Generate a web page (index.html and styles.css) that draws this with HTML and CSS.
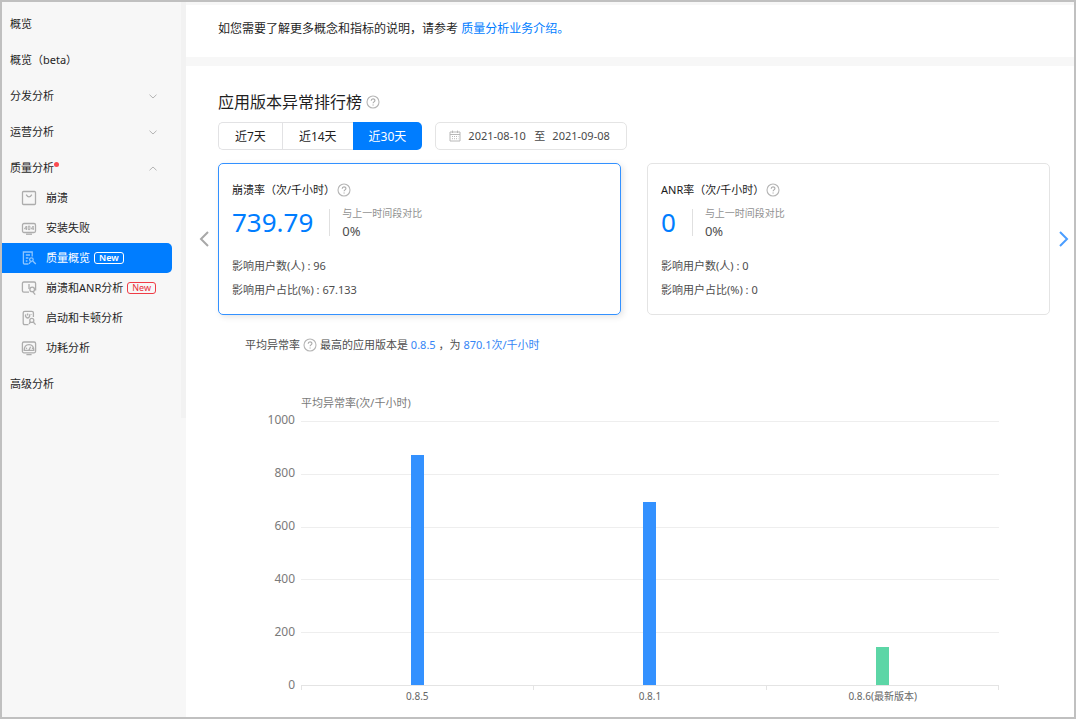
FILE: index.html
```html
<!DOCTYPE html>
<html lang="zh-CN">
<head>
<meta charset="utf-8">
<title>质量概览</title>
<link rel="stylesheet" href="styles.css">
</head>
<body>
<svg class="defs" width="0" height="0" aria-hidden="true">
  <symbol id="help" viewBox="0 0 14 14"><circle cx="7" cy="7" r="6" fill="none" stroke="#b5b5b5" stroke-width="1.1"/><path d="M5.2 5.7C5.2 3.2 8.9 3.3 8.9 5.5C8.9 6.9 7.1 6.9 7.1 8.3M7.1 9.4V10.6" fill="none" stroke="#adadad" stroke-width="1.2"/></symbol>
  <symbol id="down" viewBox="0 0 8 5"><path d="M.5 .7L4 4L7.5 .7" fill="none" stroke="#b4b4b4"/></symbol>
  <symbol id="up" viewBox="0 0 8 5"><path d="M.5 4.3L4 1L7.5 4.3" fill="none" stroke="#b4b4b4"/></symbol>
</svg>
<div class="app">
  <nav class="sidebar">
    <ul class="menu">
      <li><a class="item" href="#">概览</a></li>
      <li><a class="item" href="#">概览（beta）</a></li>
      <li><a class="item" href="#">分发分析<svg class="chevron"><use href="#down"/></svg></a></li>
      <li><a class="item" href="#">运营分析<svg class="chevron"><use href="#down"/></svg></a></li>
      <li>
        <a class="item" href="#">质量分析<span class="dot"></span><svg class="chevron"><use href="#up"/></svg></a>
        <ul class="submenu">
          <li><a class="subitem" href="#"><svg class="icon" viewBox="0 0 16 16"><rect x="1.5" y="1.5" width="13" height="13" rx="1"/><path d="M5.2 4.6Q8 9 10.8 4.6"/></svg>崩溃</a></li>
          <li><a class="subitem" href="#"><svg class="icon" viewBox="0 0 16 16"><rect x="1.5" y="3.5" width="13" height="9" rx="1.5"/><path d="M5 14.2H11"/><path class="thin" d="M5.4 10V6L3.4 8.8H6M7.2 6.2H8.9V9.6H7.2ZM12.2 10V6L10.2 8.8H12.8"/></svg>安装失败</a></li>
          <li><a class="subitem active" href="#"><svg class="icon" viewBox="0 0 16 16"><path d="M7.5 14H3.6Q2.4 14 2.4 12.8V2H11.2V6.5M4.8 5H9M4.8 8H7.4M4.8 11H6.4"/><circle cx="10.4" cy="9.6" r="1.8"/><path d="M8.2 14Q8.6 11.8 10.4 11.6M11.8 11L14.8 14"/></svg>质量概览<span class="tag">New</span></a></li>
          <li><a class="subitem" href="#"><svg class="icon" viewBox="0 0 16 16"><path d="M8 12.2H2.8Q1.4 12.2 1.4 10.8V3.4Q1.4 2 2.8 2H13.2Q14.6 2 14.6 3.4V10.6M8 4V9"/><circle cx="11.2" cy="9.4" r="2.3"/><path d="M11.8 11.6L14.2 14.6"/></svg>崩溃和ANR分析<span class="tag">New</span></a></li>
          <li><a class="subitem" href="#"><svg class="icon" viewBox="0 0 16 16"><path d="M7.5 14.6H3.8Q2.2 14.6 2.2 13V2.8Q2.2 1.4 3.8 1.4H10.8Q12.4 1.4 12.4 2.8V7"/><path d="M5 4.4A2.1 2.1 0 1 0 8.2 4.4M6.6 3.4V5.6M10 4.2V5"/><circle cx="10.8" cy="10.4" r="2"/><path d="M12.2 12L14.6 14.6M8 13.8L9.4 12"/></svg>启动和卡顿分析</a></li>
          <li><a class="subitem" href="#"><svg class="icon" viewBox="0 0 16 16"><rect x="1.4" y="2" width="13.2" height="10.8" rx="1.5"/><path d="M3.2 10.4Q3.2 4.6 8 4.6Q12.8 4.6 12.8 10.4ZM8 10L9.6 6.8M5.4 14.6H10.6M5 8L6 8.6M11 8.6L12 8"/></svg>功耗分析</a></li>
        </ul>
      </li>
      <li><a class="item" href="#">高级分析</a></li>
    </ul>
  </nav>
  <main class="main">
    <section class="notice">如您需要了解更多概念和指标的说明，请参考 <a href="#">质量分析业务介绍。</a></section>
    <section class="panel">
      <h1 class="title">应用版本异常排行榜<svg class="help"><use href="#help"/></svg></h1>
      <div class="filters">
        <div class="range">
          <button type="button">近7天</button><button type="button">近14天</button><button type="button" class="selected">近30天</button>
        </div>
        <div class="dates">
          <svg class="calendar" viewBox="0 0 12 12"><path d="M1 2H11V11H1ZM1 4.5H11M3.5 .6V3M8.5 .6V3"/><path stroke-dasharray="1 1" d="M3 6.5H9.4M3 8.7H9.4"/></svg>
          <input type="text" aria-label="开始日期" value="2021-08-10"><span>至</span><input type="text" aria-label="结束日期" value="2021-09-08">
        </div>
      </div>
      <div class="carousel">
        <button type="button" class="arrow prev" aria-label="上一页"><svg viewBox="0 0 10 16"><path d="M9 1L2 8L9 15"/></svg></button>
        <div class="cards">
          <article class="card current">
            <h2>崩溃率（次/千小时）<svg class="help"><use href="#help"/></svg></h2>
            <div class="figures">
              <strong>739.79</strong>
              <div class="compare"><span>与上一时间段对比</span><b>0%</b></div>
            </div>
            <p>影响用户数(人) : 96</p>
            <p>影响用户占比(%) : 67.133</p>
          </article>
          <article class="card">
            <h2>ANR率（次/千小时）<svg class="help"><use href="#help"/></svg></h2>
            <div class="figures">
              <strong>0</strong>
              <div class="compare"><span>与上一时间段对比</span><b>0%</b></div>
            </div>
            <p>影响用户数(人) : 0</p>
            <p>影响用户占比(%) : 0</p>
          </article>
        </div>
        <button type="button" class="arrow next" aria-label="下一页"><svg viewBox="0 0 10 16"><path d="M1 1L8 8L1 15"/></svg></button>
      </div>
      <p class="summary">平均异常率<svg class="help"><use href="#help"/></svg><span>最高的应用版本是 <em>0.8.5</em> ，为 <em>870.1次/千小时</em></span></p>
      <figure class="chart">
        <figcaption>平均异常率(次/千小时)</figcaption>
        <div class="scale"><span>1000</span><span>800</span><span>600</span><span>400</span><span>200</span><span>0</span></div>
        <div class="lines"><i></i><i></i><i></i><i></i><i></i></div>
        <div class="bars">
          <div class="bar" style="height:87%"></div>
          <div class="bar" style="height:69.2%"></div>
          <div class="bar latest" style="height:14.5%"></div>
        </div>
        <div class="labels"><span>0.8.5</span><span>0.8.1</span><span>0.8.6(最新版本)</span></div>
      </figure>
    </section>
  </main>
</div>
</body>
</html>
```
FILE: styles.css
```css
* { box-sizing: border-box; }

body {
  margin: 0;
  font: 11px/20px "Noto Sans", "Noto Sans CJK SC", sans-serif;
  color: #1f1f1f;
}

a { color: inherit; text-decoration: none; }
ul { list-style: none; margin: 0; padding: 0; }
h1, h2, p, figure { margin: 0; font-weight: 400; }
button, input { font: inherit; color: inherit; margin: 0; }
.defs { display: none; }

.app {
  display: flex;
  min-height: 100vh;
  border: 2px solid #c0c0c0;
  background: #f7f7f7;
}

/* Sidebar */
.sidebar { flex: 0 0 184px; }
.menu {
  padding: 4px 0 16px;
  border-right: 5px solid #f2f2f2;
}
.item {
  display: flex;
  align-items: center;
  height: 36px;
  padding: 0 24px 0 8px;
}
.chevron { width: 8px; height: 5px; margin-left: auto; }
.dot {
  width: 5px;
  height: 5px;
  margin-bottom: 8px;
  border-radius: 50%;
  background: #fa4b50;
}
.submenu { margin: -3px 0 3px; }
.subitem {
  display: flex;
  align-items: center;
  height: 30px;
  margin-right: 9px;
  padding-left: 19px;
}
.icon {
  width: 16px;
  height: 16px;
  margin-right: 9px;
  fill: none;
  stroke: #adadad;
  stroke-width: 1.3;
}
.icon .thin { stroke-width: 1; }
.tag {
  margin-left: 4px;
  padding: 0 4px;
  border: 1px solid #f03c46;
  border-radius: 3px;
  font-size: 9px;
  line-height: 10px;
  color: #e8303a;
}
.subitem.active {
  border-radius: 0 5px 5px 0;
  background: #007dff;
  color: #fff;
}
.active .icon { stroke: #8cc5ff; }
.active .tag { border-color: #fff; color: #fff; font-weight: 600; }

/* Content */
.main {
  display: flex;
  flex-direction: column;
  flex: 1;
  min-width: 0;
  gap: 9px;
  padding-top: 3px;
}
.notice {
  padding: 14px 32px 18px;
  background: #fff;
  font-size: 12px;
}
.notice a { color: #007dff; }
.panel { flex: 1; padding-top: 24px; background: #fff; }

.help { flex: none; width: 14px; height: 14px; }
.title {
  display: flex;
  align-items: center;
  gap: 4px;
  padding-left: 32px;
  font-size: 16px;
  line-height: 24px;
}
.filters {
  display: flex;
  gap: 13px;
  margin-top: 8px;
  padding-left: 32px;
}
.range { display: flex; }
.range button {
  height: 28px;
  padding: 1px 16px 0;
  border: 1px solid #e2e2e4;
  border-right-width: 0;
  background: #fff;
  font-size: 12px;
}
.range button:first-child { border-radius: 5px 0 0 5px; }
.range .selected {
  border: 0;
  border-radius: 0 5px 5px 0;
  background: #007dff;
  color: #fff;
}
.dates {
  display: flex;
  align-items: center;
  height: 28px;
  padding: 0 14px 0 13px;
  border: 1px solid #e4e4e4;
  border-radius: 5px;
  color: #4a4a4a;
}
.dates input {
  width: 60px;
  padding: 0;
  border: 0;
  background: none;
}
.dates span { margin: 0 7px 0 6px; }
.calendar {
  width: 12px;
  height: 12px;
  margin-right: 7px;
  fill: none;
  stroke: #b8b8b8;
}

.carousel {
  display: grid;
  grid-template-columns: 32px 1fr 24px;
  margin-top: 13px;
}
.arrow {
  display: flex;
  align-items: center;
  padding: 0;
  border: 0;
  background: none;
}
.prev { justify-content: flex-end; padding-right: 9px; }
.next { justify-content: center; padding-left: 3px; }
.arrow svg {
  width: 10px;
  height: 16px;
  fill: none;
  stroke: #a8a8a8;
  stroke-width: 2;
}
.next svg { stroke: #4a9dff; }
.cards {
  display: grid;
  grid-template-columns: 1fr 1fr;
  gap: 26px;
}
.card {
  padding: 16px 13px 12px;
  border: 1px solid #e4e4e4;
  border-radius: 5px;
  color: #4d4d4d;
}
.card.current {
  border-color: #3391ff;
  box-shadow: 2px 2px 6px #e4e4e4;
}
.card h2 {
  display: flex;
  align-items: center;
  gap: 2px;
  font-size: 11px;
  color: #1a1a1a;
}
.figures {
  display: flex;
  align-items: center;
  gap: 16px;
  height: 46px;
  padding-bottom: 2px;
}
.figures strong {
  font-size: 26px;
  line-height: 32px;
  font-weight: 400;
  color: #007dff;
}
.compare {
  display: flex;
  flex-direction: column;
  justify-content: center;
  height: 27px;
  padding-left: 12px;
  border-left: 1px solid #e0e0e0;
}
.compare span { font-size: 10px; line-height: 18px; color: #919191; }
.compare b { font-size: 13px; line-height: 18px; font-weight: 400; }
.card p { line-height: 24px; }
.card p:first-of-type { margin-top: 8px; }

.summary {
  display: flex;
  align-items: center;
  gap: 3px;
  margin-top: 20px;
  padding-left: 59px;
  color: #4d4d4d;
}
.summary em { font-style: normal; color: #3585f5; }

/* Chart: scale | plot, with the bars stacked over the grid lines */
.chart {
  display: grid;
  grid-template-columns: 110px 1fr;
  grid-template-rows: 28px 265px 20px;
  margin: 38px 75px 0 0;
  padding-left: 5px;
  color: #7a7a7a;
}
.chart figcaption { grid-area: 1 / 2; }
.scale {
  grid-area: 2 / 1;
  display: flex;
  flex-direction: column;
  justify-content: space-between;
  margin: -11px 0 -9px;
  padding-right: 6px;
  font-size: 12px;
  text-align: right;
}
.lines {
  grid-area: 2 / 2;
  display: grid;
  grid-template-rows: repeat(5, 1fr);
  border-bottom: 1px solid #e4e4e4;
}
.lines i { border-top: 1px solid #eee; }
.bars {
  grid-area: 2 / 2;
  display: grid;
  grid-template-columns: repeat(3, 1fr);
  align-items: end;
  justify-items: center;
  padding-bottom: 1px;
}
.bar { width: 13px; background: #3391ff; }
.bar.latest { background: #5cd6a6; }
.labels {
  grid-area: 3 / 2;
  display: grid;
  grid-template-columns: repeat(3, 1fr);
  font-size: 10px;
  text-align: center;
  color: #666;
  background: repeating-linear-gradient(90deg, #e4e4e4 0 1px, transparent 1px calc((100% - 1px) / 3)) 0 0 / 100% 4px no-repeat;
}
```
